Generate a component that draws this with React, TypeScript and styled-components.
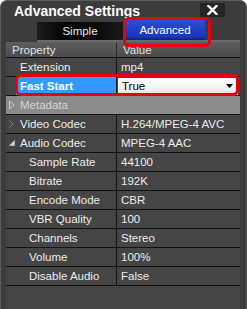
import React from 'react';
import styled, { createGlobalStyle } from 'styled-components';

const Global = createGlobalStyle`
  html, body { margin: 0; padding: 0; background: #ffffff; }
  body { font-family: "Liberation Sans", Arial, sans-serif; }
`;

const Window = styled.div`
  position: relative;
  width: 247px;
  height: 309px;
  box-sizing: border-box;
  background: #3c3c3c;
  border: 1px solid #5a5a5a;
  border-bottom: none;
  border-radius: 7px 7px 0 0;
  display: flex;
  flex-direction: column;
  overflow: hidden;
`;

const TitleBar = styled.div`
  height: 20px;
  display: flex;
  align-items: center;
  padding-left: 13px;
`;

const Title = styled.div`
  flex: 1;
  color: #ffffff;
  font-weight: bold;
  font-size: 14px;
  line-height: 20px;
`;

const CloseButton = styled.div`
  width: 25px;
  height: 14px;
  margin: 1px 21px 0 0;
  align-self: flex-start;
  margin-top: 2px;
  background: #262626;
  display: flex;
  align-items: center;
  justify-content: center;
`;

const TabStrip = styled.div`
  display: flex;
  align-items: flex-end;
  gap: 2px;
  height: 19px;
  margin: 0 6px 0 36px;
  border-bottom: 2px solid #6a6a6a;
`;

const Tab = styled.div<{ $active?: boolean }>`
  height: ${p => (p.$active ? '20px' : '18px')};
  width: ${p => (p.$active ? '80px' : '86px')};
  box-sizing: border-box;
  display: flex;
  align-items: center;
  justify-content: center;
  font-size: 11.5px;
  color: ${p => (p.$active ? '#ffffff' : '#e6e6e6')};
  background: ${p =>
    p.$active
      ? 'linear-gradient(#2a4fd6, #1836b8 85%, #0e2070)'
      : 'linear-gradient(90deg, #1c1c1c, #050505 30%, #0a0a0a 70%, #1a1a1a)'};
  margin-bottom: ${p => (p.$active ? '0' : '0')};
`;

const Grid = styled.div`
  flex: 1;
  margin: 0 6px 0 5px;
  background: #454545;
  display: flex;
  flex-direction: column;
`;

const Row = styled.div<{ $group?: boolean; $header?: boolean }>`
  display: grid;
  grid-template-columns: 111px 1fr;
  height: ${p => (p.$header ? '16px' : '19px')};
  box-sizing: border-box;
  border-bottom: 1px solid #121212;
  background: ${p =>
    p.$header ? 'linear-gradient(#5e5e5e, #4c4c4c)' : p.$group ? '#8b8b8b' : 'transparent'};
  font-size: 11.5px;
  color: ${p => (p.$group ? '#d4d4d4' : '#ececec')};
`;

const NameCell = styled.div<{ $selected?: boolean; $indent?: number; $span?: boolean }>`
  position: relative;
  grid-column: ${p => (p.$span ? '1 / span 2' : 'auto')};
  box-sizing: border-box;
  border-right: ${p => (p.$span ? 'none' : '1px solid #121212')};
  display: flex;
  align-items: center;
  padding-left: 10px;
`;

const Label = styled.div<{ $selected?: boolean; $indent?: number }>`
  flex: 1;
  align-self: stretch;
  display: flex;
  align-items: center;
  padding-left: ${p => p.$indent ?? 4}px;
  background: ${p => (p.$selected ? '#3399ff' : 'transparent')};
  color: ${p => (p.$selected ? '#ffffff' : 'inherit')};
  font-weight: ${p => (p.$selected ? 'bold' : 'normal')};
  white-space: nowrap;
`;

const HeaderLabel = styled.div`
  display: flex;
  align-items: center;
  padding-left: 6px;
  color: #e0e0e0;
`;

const ValueCell = styled.div`
  display: flex;
  align-items: center;
  padding-left: 4px;
  white-space: nowrap;
`;

const Expander = styled.svg`
  position: absolute;
  left: 3px;
  top: 50%;
  transform: translateY(-50%);
`;

const Combo = styled.div`
  margin: 0 2px 0 1px;
  flex: 1;
  height: 17px;
  box-sizing: border-box;
  border-right: 1px solid #f0f0f0;
  background: linear-gradient(#ffffff, #f2f2f2 60%, #dedede);
  color: #000;
  display: flex;
  align-items: center;
  padding: 0 4px 0 4px;
`;

const ComboText = styled.span`
  flex: 1;
`;

const Highlight = styled.div<{ $l: number; $t: number; $w: number; $h: number }>`
  position: absolute;
  left: ${p => p.$l}px;
  top: ${p => p.$t}px;
  width: ${p => p.$w}px;
  height: ${p => p.$h}px;
  box-sizing: border-box;
  border: 3px solid #e8000b;
  border-radius: 6px;
  pointer-events: none;
`;

type Item = {
  name: string;
  value?: string;
  indent?: number;
  kind?: 'selected' | 'group' | 'collapsed' | 'expanded';
};

const items: Item[] = [
  { name: 'Extension', value: 'mp4' },
  { name: 'Fast Start', value: 'True', kind: 'selected' },
  { name: 'Metadata', kind: 'group' },
  { name: 'Video Codec', value: 'H.264/MPEG-4 AVC', kind: 'collapsed' },
  { name: 'Audio Codec', value: 'MPEG-4 AAC', kind: 'expanded' },
  { name: 'Sample Rate', value: '44100', indent: 13 },
  { name: 'Bitrate', value: '192K', indent: 13 },
  { name: 'Encode Mode', value: 'CBR', indent: 13 },
  { name: 'VBR Quality', value: '100', indent: 13 },
  { name: 'Channels', value: 'Stereo', indent: 13 },
  { name: 'Volume', value: '100%', indent: 13 },
  { name: 'Disable Audio', value: 'False', indent: 13 },
];

function Icon({ kind }: { kind?: Item['kind'] }) {
  if (kind === 'group')
    return (
      <Expander width="6" height="9" viewBox="0 0 6 9">
        <path d="M0.5 0.5 L5 4.5 L0.5 8.5 Z" fill="none" stroke="#c8c8c8" strokeWidth="1" />
      </Expander>
    );
  if (kind === 'collapsed')
    return (
      <Expander width="6" height="9" viewBox="0 0 6 9">
        <path d="M0.5 1 L4 4.5 L0.5 8" fill="none" stroke="#7a7a7a" strokeWidth="1" />
      </Expander>
    );
  if (kind === 'expanded')
    return (
      <Expander width="6" height="6" viewBox="0 0 6 6">
        <path d="M5.5 0.5 L5.5 5.5 L0.5 5.5 Z" fill="#cfcfcf" stroke="#cfcfcf" strokeWidth="0.6" />
      </Expander>
    );
  return null;
}

export default function App() {
  return (
    <>
      <Global />
      <Window>
        <TitleBar>
          <Title>Advanced Settings</Title>
          <CloseButton>
            <svg width="11" height="10" viewBox="0 0 11 10">
              <path d="M1.5 1 L9.5 9 M9.5 1 L1.5 9" stroke="#ffffff" strokeWidth="2.4" strokeLinecap="square" />
            </svg>
          </CloseButton>
        </TitleBar>
        <TabStrip>
          <Tab>Simple</Tab>
          <Tab $active>Advanced</Tab>
        </TabStrip>
        <Grid>
          <Row $header>
            <HeaderLabel style={{ borderRight: '1px solid #2a2a2a' }}>Property</HeaderLabel>
            <HeaderLabel>Value</HeaderLabel>
          </Row>
          {items.map(it =>
            it.kind === 'group' ? (
              <Row key={it.name} $group>
                <NameCell $span>
                  <Icon kind={it.kind} />
                  <Label>{it.name}</Label>
                </NameCell>
              </Row>
            ) : (
              <Row key={it.name}>
                <NameCell>
                  <Icon kind={it.kind} />
                  <Label $selected={it.kind === 'selected'} $indent={it.indent}>
                    {it.name}
                  </Label>
                </NameCell>
                {it.kind === 'selected' ? (
                  <ValueCell style={{ paddingLeft: 0 }}>
                    <Combo>
                      <ComboText>{it.value}</ComboText>
                      <svg width="7" height="4" viewBox="0 0 7 4">
                        <path d="M0 0 L7 0 L3.5 4 Z" fill="#000" />
                      </svg>
                    </Combo>
                  </ValueCell>
                ) : (
                  <ValueCell>{it.value}</ValueCell>
                )}
              </Row>
            )
          )}
        </Grid>
        <Highlight $l={122} $t={16} $w={88} $h={30} />
        <Highlight $l={14} $t={73} $w={224} $h={22} />
      </Window>
    </>
  );
}
